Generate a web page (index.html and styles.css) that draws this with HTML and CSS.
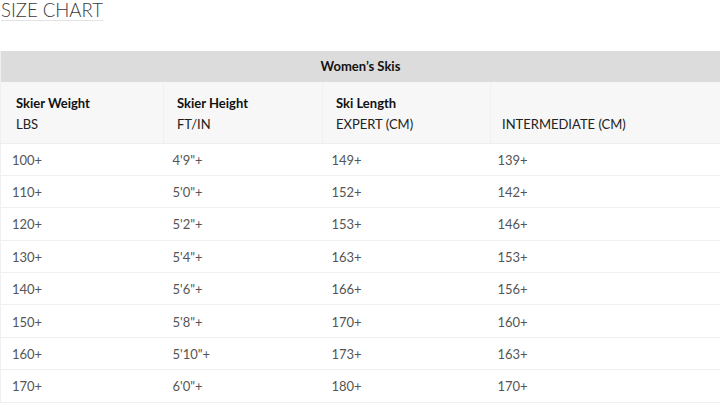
FILE: index.html
```html
<!DOCTYPE html>
<html>
<head>
<meta charset="utf-8">
<link rel="stylesheet" href="styles.css">
</head>
<body>
<h2 class="title"><span class="title-text">SIZE CHART</span></h2>
<table class="chart">
  <colgroup>
    <col class="c1"><col class="c2"><col class="c3"><col class="c4">
  </colgroup>
  <thead>
    <tr class="band"><th colspan="4">Women’s Skis</th></tr>
    <tr class="head">
      <th><b>Skier Weight</b><span>LBS</span></th>
      <th><b>Skier Height</b><span>FT/IN</span></th>
      <th><b>Ski Length</b><span>EXPERT (CM)</span></th>
      <th><b>&nbsp;</b><span>INTERMEDIATE (CM)</span></th>
    </tr>
  </thead>
  <tbody>
    <tr><td>100+</td><td>4'9"+</td><td>149+</td><td>139+</td></tr>
    <tr><td>110+</td><td>5'0"+</td><td>152+</td><td>142+</td></tr>
    <tr><td>120+</td><td>5'2"+</td><td>153+</td><td>146+</td></tr>
    <tr><td>130+</td><td>5'4"+</td><td>163+</td><td>153+</td></tr>
    <tr><td>140+</td><td>5'6"+</td><td>166+</td><td>156+</td></tr>
    <tr><td>150+</td><td>5'8"+</td><td>170+</td><td>160+</td></tr>
    <tr><td>160+</td><td>5'10"+</td><td>173+</td><td>163+</td></tr>
    <tr><td>170+</td><td>6'0"+</td><td>180+</td><td>170+</td></tr>
  </tbody>
</table>
</body>
</html>
```

FILE: styles.css
```css
html, body {
  margin: 0;
  padding: 0;
  background: #fff;
}
body {
  font-family: Lato, "Open Sans", sans-serif;
  color: #333;
  overflow: hidden;
}
.title {
  margin: 0;
  padding: 1px 0 0 1px;
  height: 50px;
  font-weight: 300;
  font-size: 18.6px;
  line-height: 18px;
}
.title-text {
  display: inline-block;
  color: #3a3a3a;
  padding-bottom: 1px;
  border-bottom: 1px solid #e2e2e2;
}
.chart {
  width: 100%;
  border-collapse: collapse;
  table-layout: fixed;
  font-size: 13px;
  border-left: 1px solid #f0f0f0;
}
.c1 { width: 163px; }
.c2 { width: 159px; }
.c3 { width: 168px; }
.c4 { width: auto; }
.band th {
  background: #dcdcdc;
  height: 31px;
  padding: 0;
  font-weight: 700;
  color: #111;
  text-align: center;
  line-height: 31px;
}
.head th {
  background: #f7f7f7;
  height: 61px;
  box-sizing: border-box;
  padding: 11px 0 0 13px;
  text-align: left;
  vertical-align: top;
  font-weight: 400;
  color: #222;
  border-left: 1px solid #f0f0f0;
  border-bottom: 1px solid #efefef;
  line-height: 21px;
}
.head th:first-child { border-left: none; padding-left: 15px; }
.head th:last-child { padding-left: 11px; }
.head b, .head span { display: block; }
.head b { font-weight: 700; color: #111; }
td {
  height: 32.4px;
  box-sizing: border-box;
  padding: 1px 0 0 9px;
  color: #555;
  border-bottom: 1px solid #f0f0f0;
  vertical-align: middle;
}
td:first-child { padding-left: 11px; }
td:last-child { padding-left: 7px; }
```
